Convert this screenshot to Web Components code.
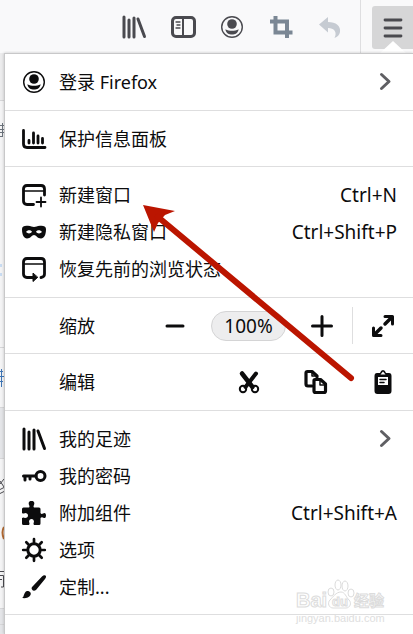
<!DOCTYPE html>
<html lang="zh-CN">
<head>
<meta charset="utf-8">
<meta name="viewport" content="width=device-width, initial-scale=1">
<title>Firefox 菜单</title>
<style>
html, body { margin: 0; min-height: 100%; }
body { font-family: "Noto Sans", "Noto Sans CJK SC", sans-serif; font-size: 18px; line-height: 24px; color: #0c0c0d; background: #f4f4f4; overflow: hidden; }
</style>
</head>
<body>
<browser-window></browser-window>
<script>
const ICONS = {
  library: '<path d="M2 2v20M7 5v17M12 3v19M16 4l6.500 17.500" stroke-width="3"/>',
  sidebar: '<rect x="1.5" y="2.5" width="22" height="19" rx="3.5" stroke-width="3"/><path d="M12 3v18" stroke-width="2"/><path d="M5 7h4M6 10h3M5 13h4" stroke-width="1.3"/>',
  account: '<circle cx="12" cy="12" r="10.3" stroke-width="1.4"/><circle cx="12" cy="9" r="4.8" fill="currentColor" stroke="none"/><path d="M5.4 14.2c4 2 9.200 2 13.200 0C18 18.200 15 19.600 12 19.600S6 18.200 5.400 14.200z" fill="currentColor" stroke="none"/>',
  crop: '<path d="M1 6.500h17v12M6.500 1v16.500h17M18 17v6" stroke-width="4" stroke-linecap="butt" stroke-linejoin="miter"/>',
  undo: '<path d="M1 9.500 10 2v5c8 0 13 4 12 10-.500 3-2.500 5-5.500 6 3-6-.500-10-6.500-10v4.500z" fill="currentColor" stroke="none"/>',
  menu: '<path d="M4 4h16M4 12h16M4 20h16" stroke-width="2.800"/>',
  chart: '<path d="M1.500 3.500v13.500q0 3.500 3.500 3.500h18" stroke-width="2.800"/><path d="M7 13.500v2.500M11.500 6v10M16 9v7M20.500 11.500v4.500" stroke-width="2.800"/>',
  window: '<path d="M11.500 21.500H5Q1.500 21.500 1.500 18V6Q1.500 2.500 5 2.500h14q3.500 0 3.500 3.500v6" stroke-width="2.800"/><path d="M2 8h20" stroke-width="1.400"/><path d="M19 14.500v9M14.500 19h9" stroke-width="1.800"/>',
  mask: '<path fill="currentColor" stroke="none" fill-rule="evenodd" d="M0 9c0-3 3-3.500 6-3.200 3 .200 4 1.200 6 1.200s3-1 6-1.200c3-.300 6 .200 6 3.200 0 6-2 9.500-5 9.500-3.500 0-5-3.500-7-3.500s-3.500 3.500-7 3.500C2 18.500 0 15 0 9zM4 12c2 2 4.500 1.800 6-.300-1.600-2-4.500-2-6 .300zM20 12c-1.500-2.300-4.400-2.300-6-.300 1.500 2.100 4 2.300 6 .300z"/>',
  restore: '<path d="M12 20.500H5Q1.500 20.500 1.500 17V5Q1.500 1.500 5 1.500h14q3.500 0 3.500 3.500v12q0 3-3.500 3.500" stroke-width="2.800"/><path d="M2 7h20" stroke-width="1.400"/><path d="M11 16.500v8l4.500-4z" fill="currentColor" stroke-width="1"/>',
  minus: '<path d="M4 12h16" stroke-width="3"/>',
  plus: '<path d="M2.500 12h19M12 2.500v19" stroke-width="3"/>',
  full: '<path d="M14 10 20 4M10 14l-6 6" stroke-width="3.500"/><path d="M14 2.500h7.500V10M10 21.500H2.500V14" stroke-width="3"/><path d="M16 2h6v6zM8 22H2v-6z" fill="currentColor" stroke="none"/>',
  cut: '<path d="M5 3.500 15.500 17" stroke-width="4.500"/><path d="M19 3.500 8.500 17" stroke-width="4"/><circle cx="6" cy="19" r="3.200" stroke-width="2"/><circle cx="18" cy="19" r="3.200" stroke-width="2"/>',
  copy: '<path d="M8 16H4Q2 16 2 14V3q0-1.500 1.500-1.500H8L13 6v1" stroke-width="3.200"/><path d="M11 9.500h5.500L21.500 14v7q0 1.500-1.500 1.500h-8.500Q10 22.500 10 21V10.500q0-1 1-1z" stroke-width="3.200"/><path d="M16 10v5h5M8 2v4h4" stroke-width="1.500"/>',
  paste: '<path fill="currentColor" stroke="none" fill-rule="evenodd" d="M6 3h3q1-3 3-3t3 3h3q2.500 0 2.500 3v15q0 3-3 3h-11q-3 0-3-3V6q0-3 2.500-3zM7 7v8h10V7zM9.500 4.500h5L12 1.500z"/><path d="M9 9.500h6M9 12.500h4" stroke-width="1.500"/>',
  key: '<circle cx="18.500" cy="12" r="4.500" stroke-width="3"/><path d="M14 12H1.500M3 12v4M8 12v3" stroke-width="3"/>',
  addon: '<path fill="currentColor" stroke="none" d="M0 8q0-1.500 1.500-1.500H7q1-1 0-2.500C6 1 7.500 0 9.500 0S13 1 12 4q-1 1.500 0 2.500h5q1.500 0 1.500 1.500v4q1 1.500 2.500.500C23 11 24 12.500 24 14.500S23 18 21 16.500q-1.500-.800-2.500.500v5.500Q18.500 24 17 24h-5q-1-1.500 0-3c0-2-1-3-2.500-3S7 19 7 21q1 1.500 0 3H1.500Q0 24 0 22.500V17q1.500-1 3 0c2 0 3-1 3-2.500S5 12 3 12q-1.500 1-3 0z"/>',
  gear: '<circle cx="12" cy="12" r="6.200" stroke-width="3"/><path d="M12 1.200v4M12 18.800v4M1.200 12h4M18.800 12h4M4.300 4.300l2.900 2.900M16.800 16.800l2.900 2.900M19.700 4.300l-2.900 2.900M7.200 16.800l-2.900 2.900" stroke-width="2.700"/>',
  brush: '<path fill="currentColor" stroke="none" d="M23.500.500c1 1 .500 2-.500 3.500L14 15c-1.500 1-3 1-4-.500s0-2.500 1-3.500L20 1.500q2-2 3.500-1zM0 23c2.500-1 1.500-6 5-7 3 0 4.500 2 3.500 4-1.500 3-5.500 3.500-8.500 3z"/>',
  chevron: '<path d="M8.500 4.500 16 11.500 8.500 18.500" stroke-width="3"/>'
};

class UiIcon extends HTMLElement {
  connectedCallback() {
    this.attachShadow({ mode: 'open' }).innerHTML = `
<style>
:host { display: block; flex: none; width: 24px; height: 24px; }
svg { display: block; width: 100%; height: 100%; overflow: visible; }
</style>
<svg viewBox="0 0 24 24" fill="none" stroke="currentColor" stroke-linecap="round" stroke-linejoin="round" aria-hidden="true">${ICONS[this.getAttribute('name')]}</svg>`;
  }
}

class ToolBar extends HTMLElement {
  constructor() {
    super();
    this.attachShadow({ mode: 'open' }).innerHTML = `
<style>
:host { display: flex; justify-content: flex-end; height: 53px; background: #f9f9fa; color: #4a4a4f; }
.tools { display: flex; align-items: center; gap: 25px; padding: 1px 18px 0 0; }
button { display: flex; align-items: center; justify-content: center; padding: 0; border: 0; background: none; color: inherit; }
.crop { color: #7b8794; }
.undo { color: #c6cbd2; }
.end { display: flex; align-items: flex-start; padding: 6px 0 0 11px; border-left: 1px solid #dedee0; }
.menu { width: 41px; height: 43px; border-radius: 3px 0 0 3px; background: #d6d6d7; position: relative; }
.menu::after { content: ""; position: absolute; left: 7px; top: 35px; border: 14px solid transparent; border-top: 0; border-bottom: 13px solid #fff; }
</style>
<div class="tools">
<button aria-label="书库"><ui-icon name="library"></ui-icon></button>
<button aria-label="侧栏"><ui-icon name="sidebar"></ui-icon></button>
<button aria-label="账户"><ui-icon name="account"></ui-icon></button>
<button class="crop" aria-label="截图"><ui-icon name="crop"></ui-icon></button>
<button class="undo" aria-label="撤销"><ui-icon name="undo"></ui-icon></button>
</div>
<div class="end"><button class="menu" aria-label="打开菜单"><ui-icon name="menu"></ui-icon></button></div>`;
  }
}

class MenuItem extends HTMLElement {
  connectedCallback() {
    const key = this.getAttribute('shortcut');
    this.attachShadow({ mode: 'open' }).innerHTML = `
<style>
:host { display: block; }
button { display: flex; align-items: center; gap: 13px; width: 100%; height: 37px; padding: 0 16px 0 17px; border: 0; background: none; color: inherit; font: inherit; text-align: left; white-space: nowrap; }
.label { flex: 1; }
.key { font-size: 19px; }
.more { color: #5f5f63; }
</style>
<button><ui-icon name="${this.getAttribute('icon')}"></ui-icon><span class="label"><slot></slot></span>${key ? `<span class="key">${key}</span>` : ''}${this.hasAttribute('more') ? '<ui-icon class="more" name="chevron"></ui-icon>' : ''}</button>`;
  }
}

class MenuSection extends HTMLElement {
  constructor() {
    super();
    this.attachShadow({ mode: 'open' }).innerHTML = `
<style>
:host { display: block; padding: 9px 0; border-bottom: 1px solid #dededf; }
:host([roomy]) { padding-bottom: 10px; }
</style><slot></slot>`;
  }
}

class MenuControls extends HTMLElement {
  connectedCallback() {
    const zoom = this.getAttribute('kind') === 'zoom';
    this.attachShadow({ mode: 'open' }).innerHTML = `
<style>
:host { display: flex; align-items: center; height: 37px; padding: 0 18px 0 54px; }
.label { flex: 1; }
.set { display: flex; align-items: center; }
.zoom { gap: 24px; }
.edit { gap: 43px; }
button { display: flex; align-items: center; justify-content: center; padding: 0; border: 0; background: none; color: inherit; font: inherit; }
.level { width: 75px; height: 30px; border: 1px solid #d4d4d5; border-radius: 15px; background: #ededee; font-size: 19px; }
.full { height: 37px; padding-left: 18px; border-left: 1px solid #dededf; }
.zoom .full { margin-left: -6px; }
</style>
<span class="label"><slot></slot></span>
${zoom ? `<div class="set zoom"><button aria-label="缩小"><ui-icon name="minus"></ui-icon></button><button class="level">100%</button><button aria-label="放大"><ui-icon name="plus"></ui-icon></button><button class="full" aria-label="全屏"><ui-icon name="full"></ui-icon></button></div>`
: `<div class="set edit"><button aria-label="剪切"><ui-icon name="cut"></ui-icon></button><button aria-label="复制"><ui-icon name="copy"></ui-icon></button><button aria-label="粘贴"><ui-icon name="paste"></ui-icon></button></div>`}`;
  }
}

class MenuPanel extends HTMLElement {
  constructor() {
    super();
    this.attachShadow({ mode: 'open' }).innerHTML = `
<style>
:host { display: block; flex: 1; background: #fff; border: solid #c8c8c9; border-width: 1px 0 0 1px; box-shadow: 0 0 3px rgba(0,0,0,.2); clip-path: inset(-2px 0 0 -4px); }
</style><slot></slot>`;
  }
}

/* The sliver of the web page that stays visible beside the open menu. */
class PageEdge extends HTMLElement {
  constructor() {
    super();
    this.attachShadow({ mode: 'open' }).innerHTML = `
<style>
:host { display: block; flex: none; width: 4px; background: #f4f4f5; }
svg { display: block; }
</style>
<svg width="4" height="581" fill="none" aria-hidden="true">
<path fill="#ececed" d="M0 0h4v47H0z"/>
<path fill="#e4e5e8" d="M0 354h4v51H0zM0 555h4v26H0z"/>
<path stroke="#d6d6d8" d="M0 47.500h4M0 294.500h4M0 354.500h4M0 405.500h4M0 555.500h4M0 571.500h4"/>
<path stroke="#6d747d" d="M0 72.500h4M0 76.500h4M0 79.500h4M2.500 70v14M0 83.500h2"/>
<path stroke="#c9dcf2" stroke-width="3" d="M0 212.500h2M0 221.500h2"/>
<path stroke="#3f75b5" d="M0 318.500h3M0 323.500h4M0 328.500h3M1.500 316v18"/>
<path stroke="#4b4b50" d="M4 426 0 431M0 428l4 6M0 436.500l4-2M0 440.500l4-2"/>
<path stroke="#b36a32" stroke-width="2" d="M4 474q-3 5 0 12"/>
<path stroke="#4b4b50" d="M0 518.500h4M0 522.500h3.500V534H1M0 526.500h2"/>
</svg>`;
  }
}

class BaiduMark extends HTMLElement {
  constructor() {
    super();
    this.attachShadow({ mode: 'open' }).innerHTML = `
<style>
:host { position: absolute; right: 26px; top: 579px; width: 92px; height: 46px; pointer-events: none; }
svg { display: block; overflow: visible; font-family: "Liberation Sans", "Noto Sans CJK SC", sans-serif; }
</style>
<svg width="92" height="46" fill="#fff" stroke="#dcdcdc" stroke-width="1">
<text x="1" y="28" font-size="20" font-weight="700">Bai</text>
<ellipse cx="36" cy="13" rx="3" ry="4"/><ellipse cx="43" cy="6" rx="3" ry="5"/><ellipse cx="50" cy="7" rx="3" ry="5"/><ellipse cx="56" cy="14" rx="3" ry="4"/>
<path d="M46 13c4 0 5 5 8 8s1 8-3 8H38c-4 0-6-5-3-8s6-8 11-8z"/>
<text x="37" y="27" font-size="13" font-weight="700">du</text>
<text x="59" y="27" font-size="15" font-weight="700">经验</text>
<text x="1" y="43" font-size="11" stroke="none" fill="#dedede">jingyan.baidu.com</text>
</svg>`;
  }
}

class PointerArrow extends HTMLElement {
  constructor() {
    super();
    this.attachShadow({ mode: 'open' }).innerHTML = `
<style>
:host { position: absolute; left: 0; top: 0; pointer-events: none; }
svg { display: block; }
</style>
<svg width="413" height="634" fill="#bb1500" stroke="none"><path d="M143 205 175 211 165 215 158 223 154 232z"/><path d="M158 217 351 378" stroke="#bb1500" stroke-width="6" stroke-linecap="round"/></svg>`;
  }
}

class BrowserWindow extends HTMLElement {
  constructor() {
    super();
    this.attachShadow({ mode: 'open' }).innerHTML = `
<style>
:host { display: flex; flex-direction: column; position: relative; min-height: 100vh; overflow: hidden; }
.body { display: flex; flex: 1; }
</style>
<tool-bar></tool-bar>
<div class="body">
<page-edge></page-edge>
<menu-panel>
<menu-section roomy><menu-item icon="account" more>登录 Firefox</menu-item></menu-section>
<menu-section><menu-item icon="chart">保护信息面板</menu-item></menu-section>
<menu-section roomy>
<menu-item icon="window" shortcut="Ctrl+N">新建窗口</menu-item>
<menu-item icon="mask" shortcut="Ctrl+Shift+P">新建隐私窗口</menu-item>
<menu-item icon="restore">恢复先前的浏览状态</menu-item>
</menu-section>
<menu-section><menu-controls kind="zoom">缩放</menu-controls></menu-section>
<menu-section roomy><menu-controls kind="edit">编辑</menu-controls></menu-section>
<menu-section>
<menu-item icon="library" more>我的足迹</menu-item>
<menu-item icon="key">我的密码</menu-item>
<menu-item icon="addon" shortcut="Ctrl+Shift+A">附加组件</menu-item>
<menu-item icon="gear">选项</menu-item>
<menu-item icon="brush">定制...</menu-item>
</menu-section>
</menu-panel>
</div>
<baidu-mark></baidu-mark>
<pointer-arrow></pointer-arrow>`;
  }
}

customElements.define('ui-icon', UiIcon);
customElements.define('tool-bar', ToolBar);
customElements.define('menu-item', MenuItem);
customElements.define('menu-section', MenuSection);
customElements.define('menu-controls', MenuControls);
customElements.define('menu-panel', MenuPanel);
customElements.define('page-edge', PageEdge);
customElements.define('baidu-mark', BaiduMark);
customElements.define('pointer-arrow', PointerArrow);
customElements.define('browser-window', BrowserWindow);
</script>
</body>
</html>
